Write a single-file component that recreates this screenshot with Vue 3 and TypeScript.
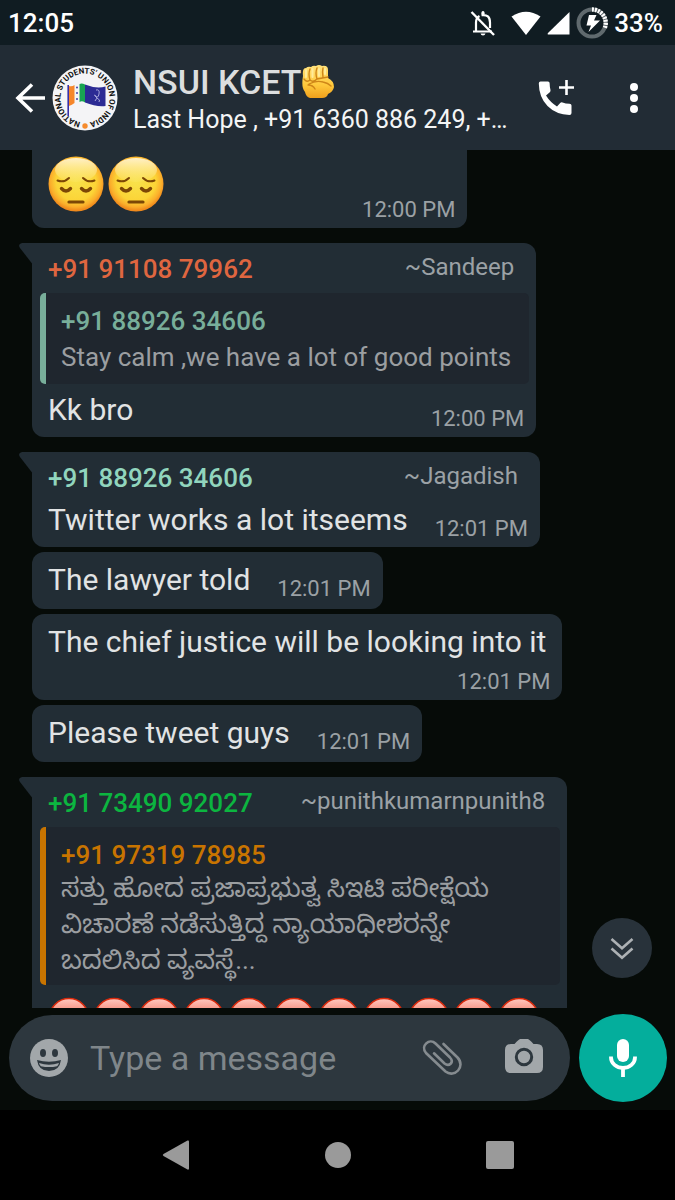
<script setup lang="ts">
import { ref } from 'vue'

interface Quote {
  author: string
  tone: string
  lines: string[]
  script?: string
}

interface Message {
  id: number
  author?: string
  tone?: string
  pushName?: string
  quote?: Quote
  text?: string
  time?: string
  wrapTime?: boolean
  pensive?: number
  angry?: number
}

const messages: Message[] = [
  { id: 1, pensive: 2, time: '12:00 PM' },
  {
    id: 2,
    author: '+91 91108 79962',
    tone: 'coral',
    pushName: '~Sandeep',
    quote: { author: '+91 88926 34606', tone: 'sage', lines: ['Stay calm ,we have a lot of good points'] },
    text: 'Kk bro',
    time: '12:00 PM',
  },
  {
    id: 3,
    author: '+91 88926 34606',
    tone: 'mint',
    pushName: '~Jagadish',
    text: 'Twitter works a lot itseems',
    time: '12:01 PM',
  },
  { id: 4, text: 'The lawyer told', time: '12:01 PM' },
  { id: 5, text: 'The chief justice will be looking into it', time: '12:01 PM', wrapTime: true },
  { id: 6, text: 'Please tweet guys', time: '12:01 PM' },
  {
    id: 7,
    author: '+91 73490 92027',
    tone: 'green',
    pushName: '~punithkumarnpunith8',
    quote: {
      author: '+91 97319 78985',
      tone: 'orange',
      script: 'kn',
      lines: ['ಸತ್ತು ಹೋದ ಪ್ರಜಾಪ್ರಭುತ್ವ ಸಿಇಟಿ ಪರೀಕ್ಷೆಯ', 'ವಿಚಾರಣೆ ನಡೆಸುತ್ತಿದ್ದ ನ್ಯಾಯಾಧೀಶರನ್ನೇ', 'ಬದಲಿಸಿದ ವ್ಯವಸ್ಥೆ...'],
    },
    angry: 11,
  },
]

const draft = ref('')
</script>

<template>
  <div class="screen">
    <div class="status">
      <span class="clock">12:05</span>
      <div class="status-icons">
        <svg class="bell" width="26" height="26" viewBox="0 0 26 26" fill="none" stroke="#fff" stroke-width="2.200">
          <path d="M3 21.500H22M6 21V12.500Q6 8 9.500 6M11.500 5.200Q20 4 20 12.500V18" />
          <path d="M1.500 2L24 25" stroke-width="2.400" />
          <path d="M11.300 4Q11.300 1 13 1T14.700 4ZM10.500 23.500H15.500Q15 25.500 13 25.500T10.500 23.500Z" fill="#fff" stroke="none" />
        </svg>
        <svg width="30" height="24" viewBox="0 0 30 24"><path d="M.5 5.500Q15-4 29.500 5.500L15 24Z" fill="#fff" /></svg>
        <svg width="23" height="24" viewBox="0 0 23 24"><path d="M22.500 1V23.500H.8Q.3 22.800 1 22Z" fill="#fff" /></svg>
        <svg width="32" height="32" viewBox="0 0 32 32">
          <circle cx="16" cy="16" r="13.500" fill="none" stroke="#606a6e" stroke-width="4" />
          <path d="M16 2.500A13.500 13.500 0 0 1 28.800 21" fill="none" stroke="#fff" stroke-width="4.400" stroke-dasharray="2 1" />
          <path d="M13 8H20.500L18 13.500H24L12.500 25L15 18.500H10.500Z" fill="#fff" />
        </svg>
        <span>33%</span>
      </div>
    </div>

    <header class="header">
      <button class="icon-button back" aria-label="Back">
        <svg width="32" height="32" viewBox="0 0 32 32" fill="none" stroke="#fff" stroke-width="3.600">
          <path d="M31 16H3M18 2.500L4 16L18 29.500" />
        </svg>
      </button>
      <svg class="avatar" width="66" height="66" viewBox="0 0 66 66">
        <circle cx="33" cy="33" r="32.500" fill="#f4f4f6" />
        <path id="rim" d="M33 57.500A24.500 24.500 0 0 1 33 8.500A24.500 24.500 0 0 1 33 57.500" fill="none" />
        <text class="rim-text" text-anchor="middle"><textPath href="#rim" startOffset="50%">NATIONAL STUDENTS' UNION OF INDIA</textPath></text>
        <circle cx="33" cy="61" r="2.700" fill="#f58b2c" />
        <path d="M16.200 20V51" stroke="#3730a8" stroke-width="1.600" />
        <path d="M17 21Q20 22 22.500 20V38Q20 40 17 41Z" fill="#f6862a" />
        <path d="M27.500 19Q30 18 33 19.500V37.500Q30 35.500 27.500 37Z" fill="#18a452" />
        <path d="M33 19.500Q44 24 53.500 21.500V41Q44 42 33 37.500Z" fill="#2c2b94" />
        <path d="M43 36Q46 33 44 31L42 30M44 25Q48 24 47 29T43 31M45 33Q49 35 47 37" fill="none" stroke="#a9a8dc" />
        <g fill="#443fa6"><circle cx="25" cy="22.500" r="1" /><circle cx="25" cy="28" r="1" /><circle cx="25" cy="34" r="1" /></g>
      </svg>
      <div class="heading">
        <h1>
          NSUI KCET<svg width="34" height="34" viewBox="0 0 34 34" role="img" aria-label="Raised fist">
            <defs>
              <linearGradient id="skin" x1="0" y1="0" x2="0" y2="1"><stop offset="0" stop-color="#ffe27c" /><stop offset=".6" stop-color="#ffc93c" /><stop offset="1" stop-color="#f0a01c" /></linearGradient>
            </defs>
            <path d="M2 11Q1 3 5 3Q7 1 10 2Q12 0 15 1Q18-1 21 1Q27 0 27 5V13Q33 16 33 22Q32 27 27 29Q26 33 21 33H9Q5 32 4 27Q0 23 2 11Z" fill="url(#skin)" />
            <path d="M9 4Q7 9 9 15M16 3Q14 8 16 14M22 3Q21 7 22 12M3 14Q6 18 9 15Q12 18 16 14L27 12M8 19Q15 15 22 17Q27 18 30 21M7 20Q12 20 14 24" fill="none" stroke="#cf8618" stroke-width="1.400" stroke-linecap="round" />
            <path d="M5 5V12M11.500 4V12M18 4V11M24 4V9" stroke="#ffeb9a" stroke-width="2" stroke-linecap="round" />
          </svg>
        </h1>
        <p>Last Hope , +91 6360 886 249, +…</p>
      </div>
      <button class="icon-button call" aria-label="Start group call">
        <svg width="36" height="36" viewBox="0 0 36 36" fill="#fff">
          <path d="M2.500 1.500H10Q11.500 1.500 11.600 3Q11.700 7 12.500 10Q12.700 11.300 11.800 12.200L8 15.500Q12 22 19 26.500L22.200 23Q23 22 24.500 22.400Q27.500 23.500 31.500 23.800Q33.500 24 33.500 25.500V33Q33.500 35 31.500 35Q18 34.500 9.500 26T.8 3.500Q.8 1.500 2.500 1.500Z" />
          <path d="M28.500 0V15M21 7.500H36" stroke="#fff" stroke-width="2.600" />
        </svg>
      </button>
      <button class="icon-button more" aria-label="More options">
        <svg width="10" height="32" viewBox="0 0 10 32" fill="#fff"><circle cx="5" cy="5" r="4" /><circle cx="5" cy="16" r="4" /><circle cx="5" cy="27" r="4" /></svg>
      </button>
    </header>

    <main class="chat">
      <article
        v-for="m in messages"
        :key="m.id"
        class="bubble"
        :class="{ tailed: m.author, cut: m.pensive }"
      >
        <svg v-if="m.author" class="tail" width="14" height="22" viewBox="0 0 14 22"><path d="M14 0H3Q-1.500 1 1 5L13 20.500H14Z" fill="#222d35" /></svg>
        <div v-if="m.author" class="author-row">
          <span class="author" :class="m.tone">{{ m.author }}</span>
          <span class="push-name">{{ m.pushName }}</span>
        </div>
        <blockquote v-if="m.quote" class="quote" :class="[m.quote.tone, m.quote.script]" :lang="m.quote.script">
          <span class="author">{{ m.quote.author }}</span>
          <span v-for="line in m.quote.lines" :key="line" class="quote-line">{{ line }}</span>
        </blockquote>
        <div v-if="m.time" class="body" :class="{ wrapped: m.wrapTime }">
          <p v-if="m.text">{{ m.text }}</p>
          <div v-if="m.pensive" class="pensive-row">
            <svg v-for="n in m.pensive" :key="n" width="56" height="56" viewBox="0 0 56 56" role="img" aria-label="Pensive face">
              <defs>
                <radialGradient id="pensive-face" cx=".5" cy=".45" r=".53"><stop offset="0" stop-color="#f8e24c" /><stop offset=".68" stop-color="#fcd436" /><stop offset=".88" stop-color="#fbae2b" /><stop offset="1" stop-color="#f08a1c" /></radialGradient>
                <linearGradient id="shine" x1="0" y1="0" x2="0" y2="1"><stop offset="0" stop-color="#fff1c8" /><stop offset="1" stop-color="#fff1a0" stop-opacity=".1" /></linearGradient>
              </defs>
              <circle cx="28" cy="28" r="27.500" fill="url(#pensive-face)" />
              <ellipse cx="28" cy="14" rx="21" ry="12" fill="url(#shine)" />
              <g fill="none" stroke="#7c4706" stroke-linecap="round">
                <path d="M9.500 24.500Q16 27 21 22M35 22Q40 27 46.500 24.500" stroke-width="2" />
                <path d="M13.500 32.500Q18 37.500 22.500 32.500M33.500 32.500Q38 37.500 42.500 32.500" stroke-width="3.400" />
                <path d="M21 46H35" stroke-width="3.200" />
              </g>
            </svg>
          </div>
          <time>{{ m.time }}</time>
        </div>
        <div v-if="m.angry" class="angry-row">
          <svg v-for="n in m.angry" :key="n" width="42" height="42" viewBox="0 0 42 42" role="img" aria-label="Angry face">
            <defs>
              <linearGradient id="angry-face" x1="0" y1="0" x2="0" y2="1"><stop offset="0" stop-color="#ffc9c0" /><stop offset=".3" stop-color="#f79384" /><stop offset="1" stop-color="#e2331a" /></linearGradient>
            </defs>
            <circle cx="21" cy="21" r="19.500" fill="url(#angry-face)" stroke="#d92a0c" stroke-width="1.600" />
            <path d="M9 18L18 22M33 18L24 22M14 32Q21 26 28 32" fill="none" stroke="#6b1408" stroke-width="2" />
          </svg>
        </div>
      </article>

      <button class="jump" aria-label="Scroll to latest">
        <svg width="24" height="24" viewBox="0 0 24 24" fill="none" stroke="#adb1b4" stroke-width="2.600"><path d="M1.500 3L12 12.200L22.500 3M1.500 12.500L12 21.700L22.500 12.500" /></svg>
      </button>
    </main>

    <form class="composer" @submit.prevent>
      <div class="pill">
        <button class="icon-button" type="button" aria-label="Emoji">
          <svg width="38" height="38" viewBox="0 0 38 38">
            <circle cx="19" cy="19" r="19" fill="#a2a7aa" />
            <g fill="#2d373e"><ellipse cx="13" cy="14" rx="3" ry="4" /><ellipse cx="25" cy="14" rx="3" ry="4" /><path d="M7 21Q19 24.500 31 21Q29.500 32 19 32T7 21Z" /></g>
            <path d="M9 24Q19 27.500 29 24Q28.300 26.500 27 27.200Q19 29 11 27.200Q9.700 26.500 9 24Z" fill="#a2a7aa" />
          </svg>
        </button>
        <input v-model="draft" type="text" placeholder="Type a message" aria-label="Type a message" />
        <button class="icon-button" type="button" aria-label="Attach">
          <svg width="40" height="36" viewBox="0 0 40 36" fill="none" stroke="#858b8f" stroke-width="2.600" stroke-linecap="round">
            <path d="M21.500 4L35.500 17.500C44 26.500 32.500 38.500 23.500 31.500L4 13C-2 6 7.500-2.500 13.500 3.500L28 17.500C32.500 22.500 27 27 22.500 23.500L12 13.300" />
          </svg>
        </button>
        <button class="icon-button camera" type="button" aria-label="Camera">
          <svg width="38" height="38" viewBox="0 0 38 38"><path d="M6 5H9.500Q14 0 15.500 0H22.500Q24 0 28.500 5H32Q38 5 38 11V28Q38 34 32 34H6Q0 34 0 28V11Q0 5 6 5Z" fill="#a2a7aa" /><circle cx="19" cy="18" r="7.700" fill="none" stroke="#2d373e" stroke-width="3" /></svg>
        </button>
      </div>
      <button class="mic" type="button" aria-label="Record voice message">
        <svg width="28" height="38" viewBox="0 0 28 38"><rect x="8" width="12" height="23" rx="6" fill="#fff" /><path d="M2 17.500V18.500A12 10.500 0 0 0 26 18.500V17.500M14 29V38" fill="none" stroke="#fff" stroke-width="3.800" /></svg>
      </button>
    </form>

    <nav class="system-nav" aria-label="System navigation">
      <button class="icon-button" aria-label="System back"><svg width="28" height="32" viewBox="0 0 28 32"><path d="M27 2.500V29.500Q27 31 25.500 30.500L1.500 17Q0 16 1.500 15L25.500 1.500Q27 1 27 2.500Z" fill="#9a9a9a" /></svg></button>
      <button class="icon-button" aria-label="Home"><svg width="28" height="28" viewBox="0 0 28 28"><circle cx="14" cy="14" r="13" fill="#9a9a9a" /></svg></button>
      <button class="icon-button" aria-label="Recent apps"><svg width="28" height="28" viewBox="0 0 28 28"><rect width="28" height="28" rx="2" fill="#9a9a9a" /></svg></button>
    </nav>
  </div>
</template>

<style>
body {
  margin: 0;
  background: #000;
}
</style>

<style scoped>
.screen {
  display: flex;
  flex-direction: column;
  height: 100vh;
  background: #060b08;
  color: #e1e3e4;
  font-family: Roboto, "Noto Sans Kannada", "Noto Sans", sans-serif;
}
svg {
  display: block;
  flex: none;
}
p,
h1,
blockquote {
  margin: 0;
}
button {
  padding: 0;
  border: 0;
  background: none;
  font: inherit;
}
.icon-button {
  display: flex;
  align-items: center;
  justify-content: center;
  flex: none;
}
.status {
  display: flex;
  align-items: center;
  justify-content: space-between;
  flex: none;
  height: 45px;
  padding: 0 12px 0 8px;
  background: #101c22;
  color: #fff;
  font-size: 26px;
  font-weight: 500;
}
.status-icons {
  display: flex;
  align-items: center;
  gap: 6px;
}
.bell {
  margin-right: 9px;
}
.header {
  display: flex;
  align-items: center;
  flex: none;
  height: 105px;
  padding: 0 36px 0 14px;
  background: #222c35;
}
.avatar {
  margin: 0 15px 0 6px;
}
.rim-text {
  font-family: Roboto, sans-serif;
  font-size: 8px;
  font-weight: 700;
  fill: #111;
}
.heading {
  flex: 1;
  min-width: 0;
  padding-top: 4px;
}
.heading h1 {
  display: flex;
  align-items: center;
  color: #dcdedf;
  font-size: 34px;
  font-weight: 500;
  line-height: 40px;
}
.heading p {
  overflow: hidden;
  color: #f4f5f5;
  font-size: 25px;
  line-height: 36px;
  white-space: nowrap;
  text-overflow: ellipsis;
}
.call {
  margin: 0 55px 0 12px;
}
.chat {
  position: relative;
  display: flex;
  flex-direction: column;
  align-items: flex-start;
  gap: 5px;
  flex: 1;
  min-height: 0;
  overflow: hidden;
  padding: 0 12px 0 32px;
}
.bubble {
  position: relative;
  flex: none;
  border-radius: 12px;
  background: #222d35;
}
.tailed {
  margin-top: 10px;
  border-top-left-radius: 0;
}
.tail {
  position: absolute;
  top: 0;
  left: -13px;
}
.cut {
  min-width: 69%;
  box-sizing: border-box;
  border-radius: 0 0 12px 12px;
}
.author-row {
  display: flex;
  align-items: flex-start;
  justify-content: space-between;
  gap: 48px;
  height: 31px;
  padding: 11px 22px 0 16px;
}
.author {
  font-size: 26px;
  font-weight: 500;
  line-height: 30px;
}
.push-name {
  color: #9ba1a5;
  font-size: 24px;
  line-height: 26px;
}
.coral {
  color: #df6640;
}
.mint {
  color: #91d5bd;
}
.green {
  color: #0cb540;
}
.sage {
  color: #78ae9a;
}
.orange {
  color: #c87400;
}
.quote {
  display: flex;
  flex-direction: column;
  margin: 8px 7px 0 8px;
  padding: 13px 18px 6px 15px;
  border-left: 6px solid currentColor;
  border-radius: 5px;
  background: #1f262e;
}
.quote-line {
  color: #9b9ea1;
  font-size: 26px;
  line-height: 42px;
}
.kn {
  padding-bottom: 7px;
}
.kn .quote-line {
  line-height: 36px;
}
.body {
  display: flex;
  align-items: flex-end;
  justify-content: space-between;
  gap: 27px;
  padding: 8px 12px 5px 16px;
}
.body p {
  padding-bottom: 4px;
  font-size: 30px;
  line-height: 36px;
}
.body:first-child {
  padding-top: 10px;
  padding-bottom: 7px;
}
.body.wrapped {
  flex-direction: column;
  gap: 5px;
  padding-bottom: 5px;
}
.body.wrapped p {
  margin-right: 4px;
}
.cut .body:first-child {
  padding-top: 6px;
  padding-bottom: 5px;
}
.pensive-row {
  display: flex;
  gap: 4px;
  padding-bottom: 11px;
}
time {
  color: #9ba1a5;
  font-size: 22px;
  line-height: 26px;
}
.angry-row {
  display: flex;
  gap: 3px;
  padding: 12px 16px;
}
.jump {
  position: absolute;
  right: 23px;
  bottom: 30px;
  display: flex;
  align-items: center;
  justify-content: center;
  width: 60px;
  height: 60px;
  border-radius: 50%;
  background: #28323a;
}
.composer {
  display: flex;
  align-items: center;
  gap: 9px;
  flex: none;
  padding: 6px 8px 8px 9px;
}
.pill {
  display: flex;
  align-items: center;
  flex: 1;
  min-width: 0;
  height: 86px;
  box-sizing: border-box;
  padding: 0 27px 0 21px;
  border-radius: 43px;
  background: #2d373e;
}
.pill input {
  flex: 1;
  min-width: 0;
  padding: 0 0 0 22px;
  border: 0;
  outline: 0;
  background: none;
  color: #e1e3e4;
  font-family: inherit;
  font-size: 34px;
  line-height: 40px;
}
.pill input::placeholder {
  color: #7f868a;
  opacity: 1;
}
.camera {
  margin-left: 43px;
}
.mic {
  display: flex;
  align-items: center;
  justify-content: center;
  flex: none;
  width: 88px;
  height: 88px;
  border-radius: 50%;
  background: #04ae9c;
}
.system-nav {
  display: flex;
  align-items: center;
  justify-content: center;
  gap: 114px;
  flex: none;
  height: 90px;
  background: #000;
}
.system-nav .icon-button {
  width: 48px;
  height: 48px;
}
</style>
